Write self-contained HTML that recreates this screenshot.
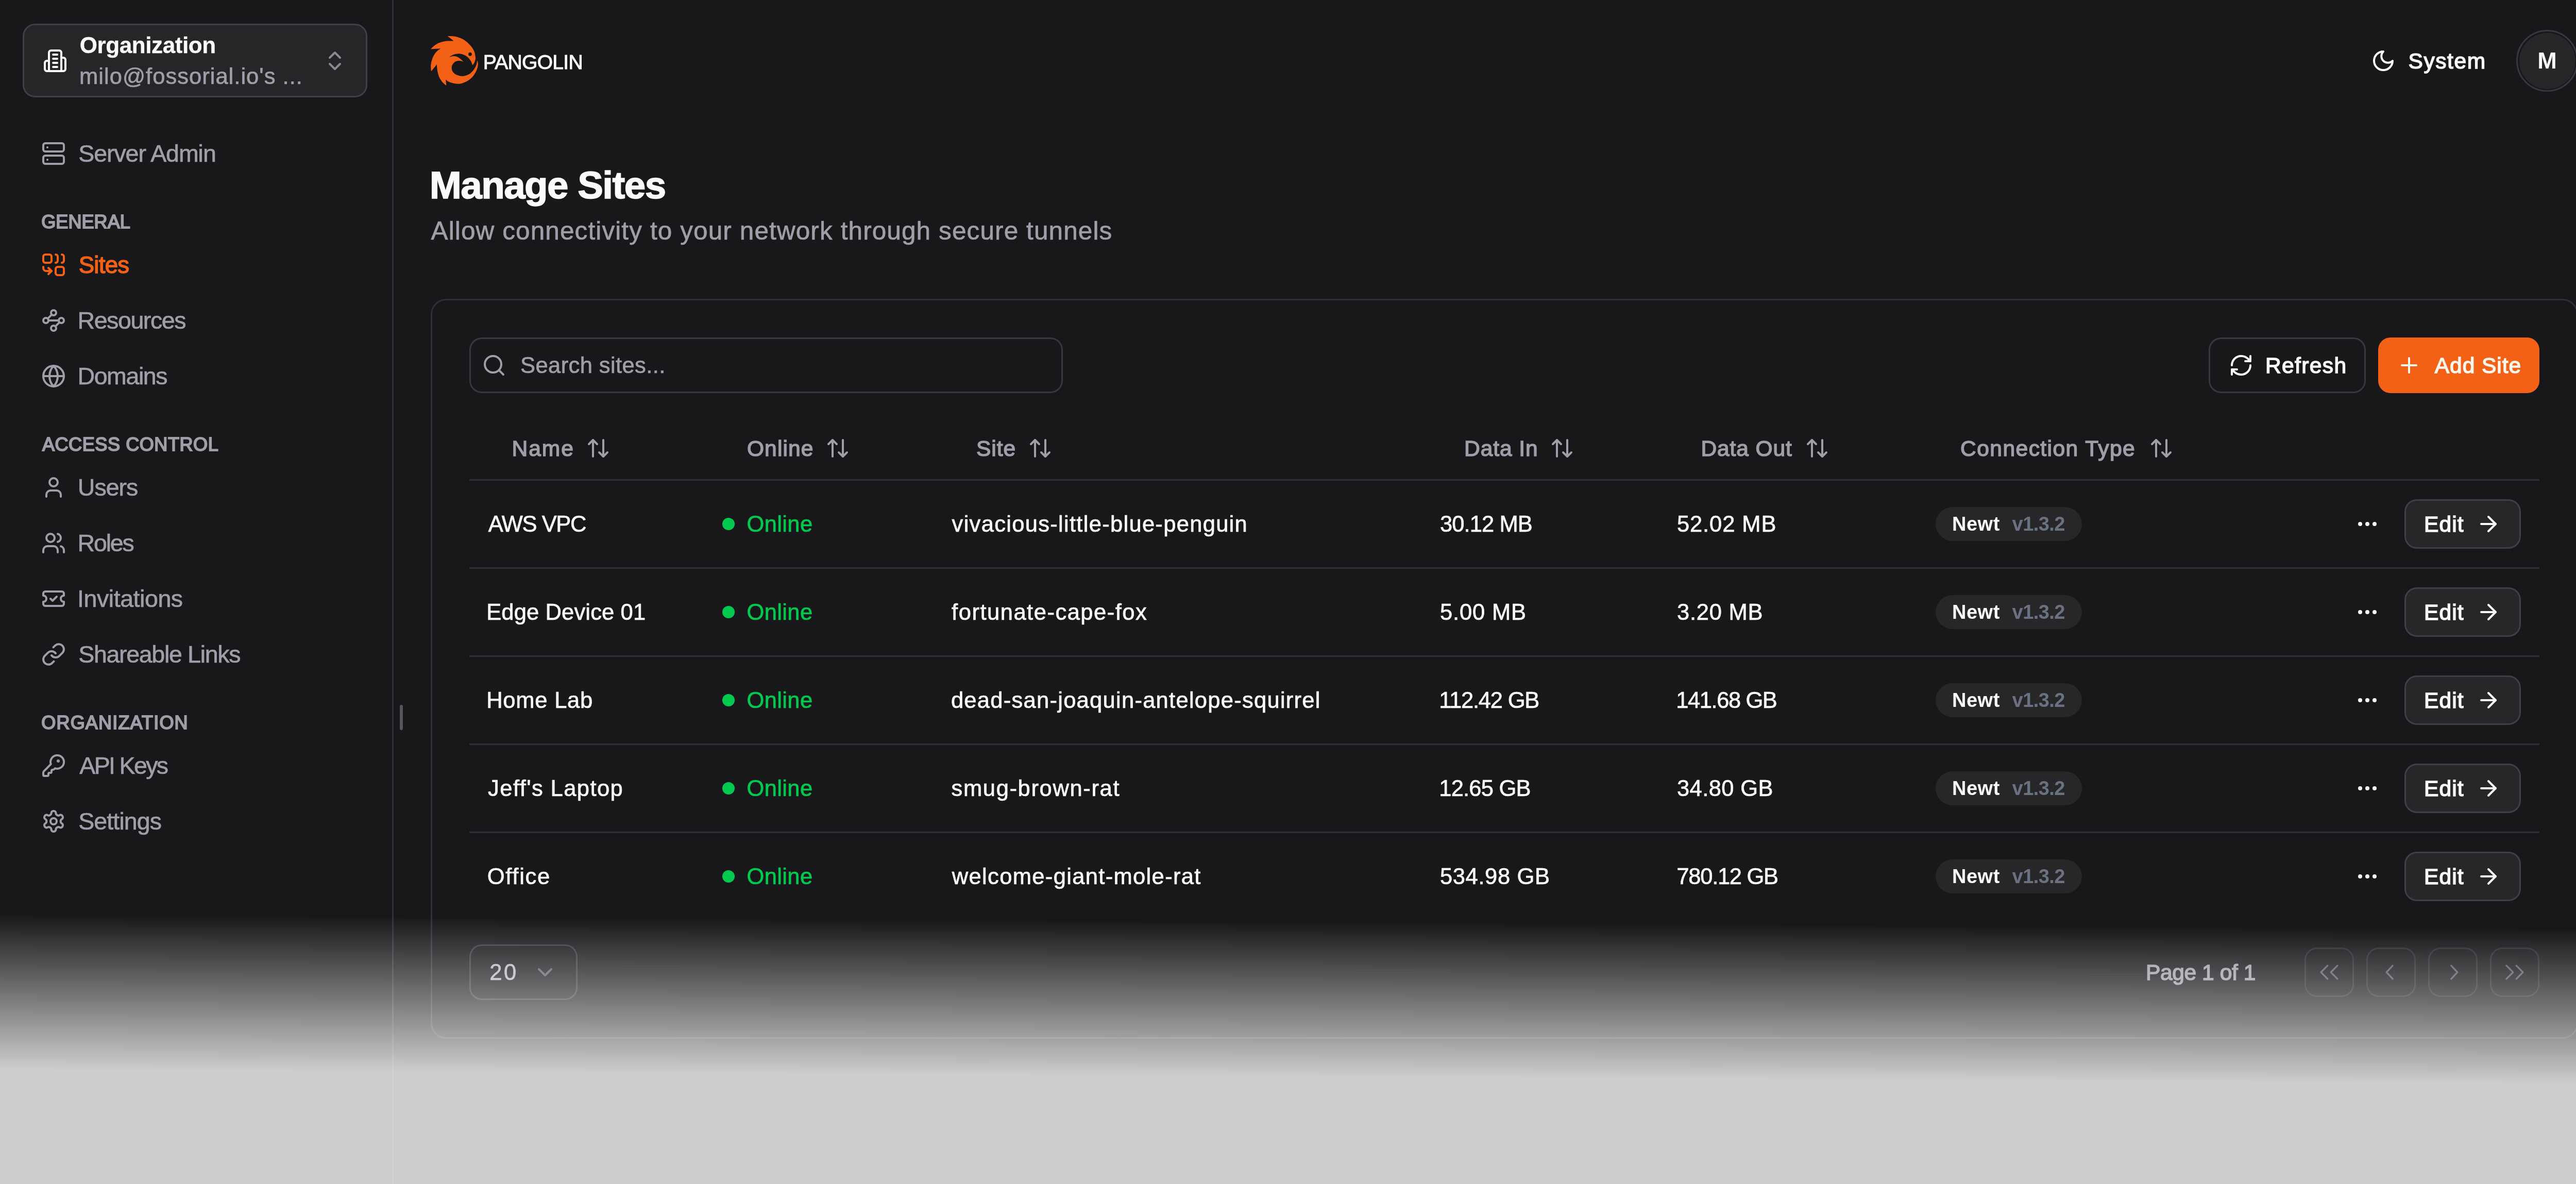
<!DOCTYPE html>
<html lang="en">
<head>
<meta charset="utf-8">
<title>Manage Sites - Pangolin</title>
<style>
*{box-sizing:border-box;margin:0;padding:0}
html,body{width:5074px;height:2298px;overflow:hidden;background:#18181b}
body{position:relative;font-family:"Liberation Sans",sans-serif;color:#fafafa;-webkit-font-smoothing:antialiased}
#app{position:absolute;left:0;top:0;width:5074px;height:2298px;background:#18181b;overflow:hidden}
span,h1,p,a,label,button{position:absolute;white-space:nowrap;display:block;font-weight:400;text-decoration:none;background:none;border:0;font-family:inherit}
.bx{position:absolute}
.ic{position:absolute;display:block;overflow:visible}
aside,header,main,nav,section{position:absolute;left:0;top:0}
#content{position:absolute;left:0;top:0;width:5074px;height:2298px;will-change:transform}
#fade{position:absolute;left:-200px;top:1773.9px;width:5600px;height:900px;transform-origin:0 0;transform:rotate(0.321deg);background:linear-gradient(to bottom,rgba(255,255,255,0) 0,rgba(255,255,255,.78) 300px,rgba(255,255,255,.78) 100%);pointer-events:none}
</style>
</head>
<body>
<div id="app">
<div id="content">

<aside>
<div class="bx" style="left:0.0px;top:0.0px;width:764.0px;height:2298.0px;border-right:3px solid #303034;"></div>
<div class="bx" style="left:44.0px;top:46.0px;width:669.0px;height:143.0px;border:3px solid #3f3f44;border-radius:24px;background:#262629;"></div>
<svg class="ic" style="left:83.0px;top:94.0px;width:48px;height:48px;color:#fafafa;" viewBox="0 0 24 24" fill="none" stroke="currentColor" stroke-width="2" stroke-linecap="round" stroke-linejoin="round"><path d="M6 22V4a2 2 0 0 1 2-2h8a2 2 0 0 1 2 2v18Z"/><path d="M6 12H4a2 2 0 0 0-2 2v6a2 2 0 0 0 2 2h2"/><path d="M18 9h2a2 2 0 0 1 2 2v9a2 2 0 0 1-2 2h-2"/><path d="M10 6h4"/><path d="M10 10h4"/><path d="M10 14h4"/><path d="M10 18h4"/></svg>
<span style="left:154.8px;top:61px;font-size:44px;line-height:54px;color:#fafafa;font-weight:700;letter-spacing:-0.42px;-webkit-text-stroke:0.3px #fafafa;">Organization</span>
<span style="left:154.0px;top:122px;font-size:43.5px;line-height:53px;color:#9f9fa9;letter-spacing:1.03px;-webkit-text-stroke:0.7px #9f9fa9;">milo@fossorial.io's ...</span>
<svg class="ic" style="left:626.0px;top:94.0px;width:48px;height:48px;color:#8b8b8f;" viewBox="0 0 24 24" fill="none" stroke="currentColor" stroke-width="2" stroke-linecap="round" stroke-linejoin="round"><path d="m7 15 5 5 5-5"/><path d="m7 9 5-5 5 5"/></svg>
<nav>
<svg class="ic" style="left:80.0px;top:274.0px;width:48px;height:48px;color:#9f9fa9;" viewBox="0 0 24 24" fill="none" stroke="currentColor" stroke-width="2" stroke-linecap="round" stroke-linejoin="round"><rect width="20" height="8" x="2" y="2" rx="2" ry="2"/><rect width="20" height="8" x="2" y="14" rx="2" ry="2"/><line x1="6" x2="6.01" y1="6" y2="6"/><line x1="6" x2="6.01" y1="18" y2="18"/></svg>
<a style="left:152.2px;top:270px;font-size:46.5px;line-height:56px;color:#9f9fa9;letter-spacing:-1.05px;-webkit-text-stroke:0.7px #9f9fa9;">Server Admin</a>
<svg class="ic" style="left:80.0px;top:490.0px;width:48px;height:48px;color:#f36117;" viewBox="0 0 24 24" fill="none" stroke="currentColor" stroke-width="2" stroke-linecap="round" stroke-linejoin="round"><path d="M10 18H5a3 3 0 0 1-3-3v-1"/><path d="M14 2a2 2 0 0 1 2 2v4a2 2 0 0 1-2 2"/><path d="M20 2a2 2 0 0 1 2 2v4a2 2 0 0 1-2 2"/><path d="m7 21 3-3-3-3"/><rect x="14" y="14" width="8" height="8" rx="2"/><rect x="2" y="2" width="8" height="8" rx="2"/></svg>
<a style="left:152.7px;top:487px;font-size:45.5px;line-height:55px;color:#f36117;letter-spacing:-0.69px;-webkit-text-stroke:1.5px #f36117;">Sites</a>
<svg class="ic" style="left:80.0px;top:598.0px;width:48px;height:48px;color:#9f9fa9;" viewBox="0 0 24 24" fill="none" stroke="currentColor" stroke-width="2" stroke-linecap="round" stroke-linejoin="round"><circle cx="12" cy="4.5" r="2.5"/><path d="m10.2 6.3-3.9 3.9"/><circle cx="4.5" cy="12" r="2.5"/><path d="M7 12h10"/><circle cx="19.5" cy="12" r="2.5"/><path d="m13.8 17.7 3.9-3.9"/><circle cx="12" cy="19.5" r="2.5"/></svg>
<a style="left:150.5px;top:594px;font-size:46.5px;line-height:56px;color:#9f9fa9;letter-spacing:-1.41px;-webkit-text-stroke:0.7px #9f9fa9;">Resources</a>
<svg class="ic" style="left:80.0px;top:706.0px;width:48px;height:48px;color:#9f9fa9;" viewBox="0 0 24 24" fill="none" stroke="currentColor" stroke-width="2" stroke-linecap="round" stroke-linejoin="round"><circle cx="12" cy="12" r="10"/><path d="M12 2a14.5 14.5 0 0 0 0 20 14.5 14.5 0 0 0 0-20"/><path d="M2 12h20"/></svg>
<a style="left:150.5px;top:702px;font-size:46.5px;line-height:56px;color:#9f9fa9;letter-spacing:-1.41px;-webkit-text-stroke:0.7px #9f9fa9;">Domains</a>
<svg class="ic" style="left:80.0px;top:922.0px;width:48px;height:48px;color:#9f9fa9;" viewBox="0 0 24 24" fill="none" stroke="currentColor" stroke-width="2" stroke-linecap="round" stroke-linejoin="round"><path d="M19 21v-2a4 4 0 0 0-4-4H9a4 4 0 0 0-4 4v2"/><circle cx="12" cy="7" r="4"/></svg>
<a style="left:150.8px;top:918px;font-size:46.5px;line-height:56px;color:#9f9fa9;letter-spacing:-0.99px;-webkit-text-stroke:0.7px #9f9fa9;">Users</a>
<svg class="ic" style="left:80.0px;top:1030.0px;width:48px;height:48px;color:#9f9fa9;" viewBox="0 0 24 24" fill="none" stroke="currentColor" stroke-width="2" stroke-linecap="round" stroke-linejoin="round"><path d="M16 21v-2a4 4 0 0 0-4-4H6a4 4 0 0 0-4 4v2"/><circle cx="9" cy="7" r="4"/><path d="M22 21v-2a4 4 0 0 0-3-3.87"/><path d="M16 3.13a4 4 0 0 1 0 7.75"/></svg>
<a style="left:150.5px;top:1026px;font-size:46.5px;line-height:56px;color:#9f9fa9;letter-spacing:-2.15px;-webkit-text-stroke:0.7px #9f9fa9;">Roles</a>
<svg class="ic" style="left:80.0px;top:1138.0px;width:48px;height:48px;color:#9f9fa9;" viewBox="0 0 24 24" fill="none" stroke="currentColor" stroke-width="2" stroke-linecap="round" stroke-linejoin="round"><path d="M2 9a3 3 0 0 1 0 6v2a2 2 0 0 0 2 2h16a2 2 0 0 0 2-2v-2a3 3 0 0 1 0-6V7a2 2 0 0 0-2-2H4a2 2 0 0 0-2 2Z"/><path d="m9 12 2 2 4-4"/></svg>
<a style="left:150.1px;top:1134px;font-size:46.5px;line-height:56px;color:#9f9fa9;letter-spacing:-0.44px;-webkit-text-stroke:0.7px #9f9fa9;">Invitations</a>
<svg class="ic" style="left:80.0px;top:1246.0px;width:48px;height:48px;color:#9f9fa9;" viewBox="0 0 24 24" fill="none" stroke="currentColor" stroke-width="2" stroke-linecap="round" stroke-linejoin="round"><path d="M10 13a5 5 0 0 0 7.54.54l3-3a5 5 0 0 0-7.07-7.07l-1.72 1.71"/><path d="M14 11a5 5 0 0 0-7.54-.54l-3 3a5 5 0 0 0 7.07 7.07l1.71-1.71"/></svg>
<a style="left:152.2px;top:1242px;font-size:46.5px;line-height:56px;color:#9f9fa9;letter-spacing:-1.30px;-webkit-text-stroke:0.7px #9f9fa9;">Shareable Links</a>
<svg class="ic" style="left:80.0px;top:1462.0px;width:48px;height:48px;color:#9f9fa9;" viewBox="0 0 24 24" fill="none" stroke="currentColor" stroke-width="2" stroke-linecap="round" stroke-linejoin="round"><path d="M2.586 17.414A2 2 0 0 0 2 18.828V21a1 1 0 0 0 1 1h3a1 1 0 0 0 1-1v-1a1 1 0 0 1 1-1h1a1 1 0 0 0 1-1v-1a1 1 0 0 1 1-1h.172a2 2 0 0 0 1.414-.586l.814-.814a6.5 6.5 0 1 0-4-4z"/><circle cx="16.5" cy="7.5" r=".5" fill="currentColor"/></svg>
<a style="left:154.3px;top:1458px;font-size:46.5px;line-height:56px;color:#9f9fa9;letter-spacing:-2.65px;-webkit-text-stroke:0.7px #9f9fa9;">API Keys</a>
<svg class="ic" style="left:80.0px;top:1570.0px;width:48px;height:48px;color:#9f9fa9;" viewBox="0 0 24 24" fill="none" stroke="currentColor" stroke-width="2" stroke-linecap="round" stroke-linejoin="round"><path d="M12.22 2h-.44a2 2 0 0 0-2 2v.18a2 2 0 0 1-1 1.73l-.43.25a2 2 0 0 1-2 0l-.15-.08a2 2 0 0 0-2.73.73l-.22.38a2 2 0 0 0 .73 2.73l.15.1a2 2 0 0 1 1 1.72v.51a2 2 0 0 1-1 1.74l-.15.09a2 2 0 0 0-.73 2.73l.22.38a2 2 0 0 0 2.73.73l.15-.08a2 2 0 0 1 2 0l.43.25a2 2 0 0 1 1 1.73V20a2 2 0 0 0 2 2h.44a2 2 0 0 0 2-2v-.18a2 2 0 0 1 1-1.73l.43-.25a2 2 0 0 1 2 0l.15.08a2 2 0 0 0 2.73-.73l.22-.39a2 2 0 0 0-.73-2.73l-.15-.08a2 2 0 0 1-1-1.74v-.5a2 2 0 0 1 1-1.74l.15-.09a2 2 0 0 0 .73-2.73l-.22-.38a2 2 0 0 0-2.73-.73l-.15.08a2 2 0 0 1-2 0l-.43-.25a2 2 0 0 1-1-1.73V4a2 2 0 0 0-2-2z"/><circle cx="12" cy="12" r="3"/></svg>
<a style="left:152.2px;top:1566px;font-size:46.5px;line-height:56px;color:#9f9fa9;letter-spacing:-0.88px;-webkit-text-stroke:0.7px #9f9fa9;">Settings</a>
<span style="left:80.2px;top:408px;font-size:36px;line-height:46px;color:#9f9fa9;letter-spacing:0.09px;-webkit-text-stroke:2.0px #9f9fa9;">GENERAL</span>
<span style="left:81.9px;top:840px;font-size:36px;line-height:46px;color:#9f9fa9;letter-spacing:0.60px;-webkit-text-stroke:2.0px #9f9fa9;">ACCESS CONTROL</span>
<span style="left:80.3px;top:1380px;font-size:36px;line-height:46px;color:#9f9fa9;letter-spacing:1.18px;-webkit-text-stroke:2.0px #9f9fa9;">ORGANIZATION</span>
</nav>
<div class="bx" style="left:776.0px;top:1368.0px;width:6.0px;height:49.0px;background:#56565c;border-radius:3px;"></div>
</aside>
<header>
<svg class="ic" style="left:826px;top:60px;width:120px;height:116px" viewBox="0 0 1207 1167"><path d="M1010 575C1012 588 1027 619 1025 650C1023 681 1016 722 1000 760C984 798 960 844 930 880C900 916 862 950 820 975C778 1000 723 1022 680 1030C637 1038 598 1032 560 1025C522 1018 478 1002 450 990C422 978 404 957 395 950L405 1065C392 1054 353 1028 330 1000C307 972 281 937 265 900C249 863 240 821 232 780C224 739 222 676 220 655L110 790C109 772 101 715 103 680C105 645 110 613 120 580C130 547 143 510 160 480C177 450 198 422 220 400C242 378 282 354 295 345L100 355C112 344 143 310 170 290C197 270 225 250 260 235C295 220 332 207 380 200C428 193 522 196 550 195L430 100C458 102 545 99 600 112C655 125 713 150 760 180C807 210 848 253 880 290C912 327 934 362 950 400C966 438 973 487 975 520C977 553 969 575 960 600C951 625 927 658 920 670C913 655 897 607 880 580C863 553 843 530 820 510C797 490 770 473 740 462C710 451 673 444 640 445C607 446 569 454 540 465C511 476 478 502 465 510C481 507 529 490 560 492C591 494 619 503 650 522C681 541 729 591 745 605C736 602 711 588 690 585C669 582 642 582 620 587C598 592 577 601 560 615C543 629 528 651 520 670C512 689 508 709 510 730C512 751 517 775 530 795C543 815 565 836 590 850C615 864 652 875 680 880C708 885 730 885 760 878C790 871 830 860 860 840C890 820 918 788 940 760C962 732 978 701 990 670C1002 639 1007 591 1010 575Z" fill="#f36117"/><circle cx="870" cy="455" r="34" fill="#18181b"/></svg>
<span style="left:937.7px;top:96px;font-size:39px;line-height:49px;color:#fafafa;letter-spacing:-0.67px;-webkit-text-stroke:1.0px #fafafa;">PANGOLIN</span>
<svg class="ic" style="left:4602.0px;top:94.0px;width:48px;height:48px;color:#fafafa;" viewBox="0 0 24 24" fill="none" stroke="currentColor" stroke-width="2" stroke-linecap="round" stroke-linejoin="round"><path d="M12 3a6 6 0 0 0 9 9 9 9 0 1 1-9-9Z"/></svg>
<span style="left:4674.5px;top:93px;font-size:42.5px;line-height:52px;color:#fafafa;letter-spacing:1.57px;-webkit-text-stroke:1.5px #fafafa;">System</span>
<div class="bx" style="left:4884.0px;top:58.0px;width:120.0px;height:120.0px;border:3px solid #38383c;border-radius:50%;"></div>
<div class="bx" style="left:4889.5px;top:63.5px;width:109.0px;height:109.0px;background:#27272a;border-radius:50%;"></div>
<span style="left:4925.2px;top:90px;font-size:45px;line-height:55px;color:#fafafa;font-weight:700;">M</span>
</header>
<main>
<h1 style="left:833.8px;top:318px;font-size:74.5px;line-height:84px;color:#fafafa;font-weight:700;letter-spacing:-1.53px;-webkit-text-stroke:1.5px #fafafa;">Manage Sites</h1>
<p style="left:836.6px;top:418px;font-size:49.5px;line-height:59px;color:#9f9fa9;letter-spacing:1.10px;-webkit-text-stroke:0.7px #9f9fa9;">Allow connectivity to your network through secure tunnels</p>
<section>
<div class="bx" style="left:836.0px;top:580.0px;width:4168.0px;height:1436.0px;border:3px solid #303034;border-radius:30px;"></div>
<div class="bx" style="left:911.0px;top:655.0px;width:1152.0px;height:108.0px;border:3px solid #38383c;border-radius:24px;"></div>
<svg class="ic" style="left:935.0px;top:685.0px;width:48px;height:48px;color:#9f9fa9;" viewBox="0 0 24 24" fill="none" stroke="currentColor" stroke-width="2" stroke-linecap="round" stroke-linejoin="round"><circle cx="11" cy="11" r="8"/><path d="m21 21-4.3-4.3"/></svg>
<span style="left:1010.0px;top:683px;font-size:43.5px;line-height:53px;color:#9f9fa9;letter-spacing:0.41px;-webkit-text-stroke:0.7px #9f9fa9;">Search sites...</span>
<div class="bx" style="left:4287.0px;top:655.0px;width:305.0px;height:108.0px;border:3px solid #38383c;border-radius:24px;"></div>
<svg class="ic" style="left:4326.0px;top:685.0px;width:48px;height:48px;color:#fafafa;" viewBox="0 0 24 24" fill="none" stroke="currentColor" stroke-width="2" stroke-linecap="round" stroke-linejoin="round"><path d="M3 12a9 9 0 0 1 9-9 9.75 9.75 0 0 1 6.74 2.74L21 8"/><path d="M21 3v5h-5"/><path d="M21 12a9 9 0 0 1-9 9 9.75 9.75 0 0 1-6.74-2.74L3 16"/><path d="M8 16H3v5"/></svg>
<span style="left:4397.0px;top:684px;font-size:42.5px;line-height:52px;color:#fafafa;letter-spacing:1.37px;-webkit-text-stroke:1.5px #fafafa;">Refresh</span>
<div class="bx" style="left:4616.0px;top:655.0px;width:313.0px;height:108.0px;background:#f36117;border-radius:24px;"></div>
<svg class="ic" style="left:4652.0px;top:685.0px;width:48px;height:48px;color:#fff7ed;" viewBox="0 0 24 24" fill="none" stroke="currentColor" stroke-width="2" stroke-linecap="round" stroke-linejoin="round"><path d="M5 12h14"/><path d="M12 5v14"/></svg>
<span style="left:4725.8px;top:684px;font-size:42.5px;line-height:52px;color:#fff7ed;letter-spacing:0.94px;-webkit-text-stroke:1.5px #fff7ed;">Add Site</span>
<span style="left:993.6px;top:845px;font-size:42.5px;line-height:52px;color:#9f9fa9;letter-spacing:1.94px;-webkit-text-stroke:1.5px #9f9fa9;">Name</span>
<svg class="ic" style="left:1136.7px;top:846.3px;width:48px;height:48px;color:#9f9fa9;" viewBox="0 0 24 24" fill="none" stroke="currentColor" stroke-width="2" stroke-linecap="round" stroke-linejoin="round"><path d="m21 16-4 4-4-4"/><path d="M17 20V4"/><path d="m3 8 4-4 4 4"/><path d="M7 4v16"/></svg>
<span style="left:1449.9px;top:845px;font-size:42.5px;line-height:52px;color:#9f9fa9;letter-spacing:1.15px;-webkit-text-stroke:1.5px #9f9fa9;">Online</span>
<svg class="ic" style="left:1601.7px;top:846.3px;width:48px;height:48px;color:#9f9fa9;" viewBox="0 0 24 24" fill="none" stroke="currentColor" stroke-width="2" stroke-linecap="round" stroke-linejoin="round"><path d="m21 16-4 4-4-4"/><path d="M17 20V4"/><path d="m3 8 4-4 4 4"/><path d="M7 4v16"/></svg>
<span style="left:1895.1px;top:845px;font-size:42.5px;line-height:52px;color:#9f9fa9;letter-spacing:0.93px;-webkit-text-stroke:1.5px #9f9fa9;">Site</span>
<svg class="ic" style="left:1994.8px;top:846.3px;width:48px;height:48px;color:#9f9fa9;" viewBox="0 0 24 24" fill="none" stroke="currentColor" stroke-width="2" stroke-linecap="round" stroke-linejoin="round"><path d="m21 16-4 4-4-4"/><path d="M17 20V4"/><path d="m3 8 4-4 4 4"/><path d="M7 4v16"/></svg>
<span style="left:2842.0px;top:845px;font-size:42.5px;line-height:52px;color:#9f9fa9;letter-spacing:0.95px;-webkit-text-stroke:1.5px #9f9fa9;">Data In</span>
<svg class="ic" style="left:3008.3px;top:846.3px;width:48px;height:48px;color:#9f9fa9;" viewBox="0 0 24 24" fill="none" stroke="currentColor" stroke-width="2" stroke-linecap="round" stroke-linejoin="round"><path d="m21 16-4 4-4-4"/><path d="M17 20V4"/><path d="m3 8 4-4 4 4"/><path d="M7 4v16"/></svg>
<span style="left:3301.5px;top:845px;font-size:42.5px;line-height:52px;color:#9f9fa9;letter-spacing:0.89px;-webkit-text-stroke:1.5px #9f9fa9;">Data Out</span>
<svg class="ic" style="left:3503.3px;top:846.3px;width:48px;height:48px;color:#9f9fa9;" viewBox="0 0 24 24" fill="none" stroke="currentColor" stroke-width="2" stroke-linecap="round" stroke-linejoin="round"><path d="m21 16-4 4-4-4"/><path d="M17 20V4"/><path d="m3 8 4-4 4 4"/><path d="M7 4v16"/></svg>
<span style="left:3805.1px;top:845px;font-size:42.5px;line-height:52px;color:#9f9fa9;letter-spacing:1.46px;-webkit-text-stroke:1.5px #9f9fa9;">Connection Type</span>
<svg class="ic" style="left:4170.8px;top:846.3px;width:48px;height:48px;color:#9f9fa9;" viewBox="0 0 24 24" fill="none" stroke="currentColor" stroke-width="2" stroke-linecap="round" stroke-linejoin="round"><path d="m21 16-4 4-4-4"/><path d="M17 20V4"/><path d="m3 8 4-4 4 4"/><path d="M7 4v16"/></svg>
<div class="bx" style="left:911.0px;top:930.0px;width:4018.0px;height:3.0px;background:#303034;"></div>
<span style="left:947.7px;top:991px;font-size:43.5px;line-height:53px;color:#fafafa;letter-spacing:-1.38px;-webkit-text-stroke:0.7px #fafafa;">AWS VPC</span>
<div class="bx" style="left:1402.0px;top:1005.0px;width:24.0px;height:24.0px;background:#00c950;border-radius:50%;"></div>
<span style="left:1449.5px;top:991px;font-size:43.5px;line-height:53px;color:#00c950;letter-spacing:0.37px;-webkit-text-stroke:0.7px #00c950;">Online</span>
<span style="left:1847.6px;top:991px;font-size:43.5px;line-height:53px;color:#fafafa;letter-spacing:1.30px;-webkit-text-stroke:0.7px #fafafa;">vivacious-little-blue-penguin</span>
<span style="left:2795.0px;top:991px;font-size:43.5px;line-height:53px;color:#fafafa;letter-spacing:-0.91px;-webkit-text-stroke:0.7px #fafafa;">30.12 MB</span>
<span style="left:3254.9px;top:991px;font-size:43.5px;line-height:53px;color:#fafafa;letter-spacing:0.92px;-webkit-text-stroke:0.7px #fafafa;">52.02 MB</span>
<div class="bx" style="left:3756.6px;top:984.0px;width:284.4px;height:66.0px;background:#27272a;border-radius:33px;"></div>
<span style="left:3788.9px;top:993px;font-size:38px;line-height:48px;color:#fafafa;font-weight:700;letter-spacing:0.57px;">Newt</span>
<span style="left:3905.6px;top:993px;font-size:38px;line-height:48px;color:#6a7282;font-weight:700;letter-spacing:-0.58px;">v1.3.2</span>
<svg class="ic" style="left:4571.0px;top:993.0px;width:48px;height:48px;color:#fafafa;" viewBox="0 0 24 24" fill="none" stroke="currentColor" stroke-width="2" stroke-linecap="round" stroke-linejoin="round"><circle cx="12" cy="12" r="1"/><circle cx="19" cy="12" r="1"/><circle cx="5" cy="12" r="1"/></svg>
<div class="bx" style="left:4667.0px;top:969.0px;width:226.0px;height:96.0px;background:#27272a;border:3px solid #3f3f44;border-radius:24px;"></div>
<span style="left:4705.0px;top:992px;font-size:42.5px;line-height:52px;color:#fafafa;letter-spacing:1.09px;-webkit-text-stroke:1.5px #fafafa;">Edit</span>
<svg class="ic" style="left:4806.4px;top:993.0px;width:48px;height:48px;color:#fafafa;" viewBox="0 0 24 24" fill="none" stroke="currentColor" stroke-width="2" stroke-linecap="round" stroke-linejoin="round"><path d="M5 12h14"/><path d="m12 5 7 7-7 7"/></svg>
<div class="bx" style="left:911.0px;top:1101.0px;width:4018.0px;height:3.0px;background:#303034;"></div>
<span style="left:944.2px;top:1162px;font-size:43.5px;line-height:53px;color:#fafafa;letter-spacing:0.14px;-webkit-text-stroke:0.7px #fafafa;">Edge Device 01</span>
<div class="bx" style="left:1402.0px;top:1176.0px;width:24.0px;height:24.0px;background:#00c950;border-radius:50%;"></div>
<span style="left:1449.5px;top:1162px;font-size:43.5px;line-height:53px;color:#00c950;letter-spacing:0.37px;-webkit-text-stroke:0.7px #00c950;">Online</span>
<span style="left:1847.1px;top:1162px;font-size:43.5px;line-height:53px;color:#fafafa;letter-spacing:1.51px;-webkit-text-stroke:0.7px #fafafa;">fortunate-cape-fox</span>
<span style="left:2794.9px;top:1162px;font-size:43.5px;line-height:53px;color:#fafafa;letter-spacing:0.86px;-webkit-text-stroke:0.7px #fafafa;">5.00 MB</span>
<span style="left:3255.0px;top:1162px;font-size:43.5px;line-height:53px;color:#fafafa;letter-spacing:0.74px;-webkit-text-stroke:0.7px #fafafa;">3.20 MB</span>
<div class="bx" style="left:3756.6px;top:1155.0px;width:284.4px;height:66.0px;background:#27272a;border-radius:33px;"></div>
<span style="left:3788.9px;top:1164px;font-size:38px;line-height:48px;color:#fafafa;font-weight:700;letter-spacing:0.57px;">Newt</span>
<span style="left:3905.6px;top:1164px;font-size:38px;line-height:48px;color:#6a7282;font-weight:700;letter-spacing:-0.58px;">v1.3.2</span>
<svg class="ic" style="left:4571.0px;top:1164.0px;width:48px;height:48px;color:#fafafa;" viewBox="0 0 24 24" fill="none" stroke="currentColor" stroke-width="2" stroke-linecap="round" stroke-linejoin="round"><circle cx="12" cy="12" r="1"/><circle cx="19" cy="12" r="1"/><circle cx="5" cy="12" r="1"/></svg>
<div class="bx" style="left:4667.0px;top:1140.0px;width:226.0px;height:96.0px;background:#27272a;border:3px solid #3f3f44;border-radius:24px;"></div>
<span style="left:4705.0px;top:1163px;font-size:42.5px;line-height:52px;color:#fafafa;letter-spacing:1.09px;-webkit-text-stroke:1.5px #fafafa;">Edit</span>
<svg class="ic" style="left:4806.4px;top:1164.0px;width:48px;height:48px;color:#fafafa;" viewBox="0 0 24 24" fill="none" stroke="currentColor" stroke-width="2" stroke-linecap="round" stroke-linejoin="round"><path d="M5 12h14"/><path d="m12 5 7 7-7 7"/></svg>
<div class="bx" style="left:911.0px;top:1272.0px;width:4018.0px;height:3.0px;background:#303034;"></div>
<span style="left:944.2px;top:1333px;font-size:43.5px;line-height:53px;color:#fafafa;letter-spacing:0.77px;-webkit-text-stroke:0.7px #fafafa;">Home Lab</span>
<div class="bx" style="left:1402.0px;top:1347.0px;width:24.0px;height:24.0px;background:#00c950;border-radius:50%;"></div>
<span style="left:1449.5px;top:1333px;font-size:43.5px;line-height:53px;color:#00c950;letter-spacing:0.37px;-webkit-text-stroke:0.7px #00c950;">Online</span>
<span style="left:1845.9px;top:1333px;font-size:43.5px;line-height:53px;color:#fafafa;letter-spacing:1.27px;-webkit-text-stroke:0.7px #fafafa;">dead-san-joaquin-antelope-squirrel</span>
<span style="left:2793.3px;top:1333px;font-size:43.5px;line-height:53px;color:#fafafa;letter-spacing:-1.22px;-webkit-text-stroke:0.7px #fafafa;">112.42 GB</span>
<span style="left:3253.3px;top:1333px;font-size:43.5px;line-height:53px;color:#fafafa;letter-spacing:-1.43px;-webkit-text-stroke:0.7px #fafafa;">141.68 GB</span>
<div class="bx" style="left:3756.6px;top:1326.0px;width:284.4px;height:66.0px;background:#27272a;border-radius:33px;"></div>
<span style="left:3788.9px;top:1335px;font-size:38px;line-height:48px;color:#fafafa;font-weight:700;letter-spacing:0.57px;">Newt</span>
<span style="left:3905.6px;top:1335px;font-size:38px;line-height:48px;color:#6a7282;font-weight:700;letter-spacing:-0.58px;">v1.3.2</span>
<svg class="ic" style="left:4571.0px;top:1335.0px;width:48px;height:48px;color:#fafafa;" viewBox="0 0 24 24" fill="none" stroke="currentColor" stroke-width="2" stroke-linecap="round" stroke-linejoin="round"><circle cx="12" cy="12" r="1"/><circle cx="19" cy="12" r="1"/><circle cx="5" cy="12" r="1"/></svg>
<div class="bx" style="left:4667.0px;top:1311.0px;width:226.0px;height:96.0px;background:#27272a;border:3px solid #3f3f44;border-radius:24px;"></div>
<span style="left:4705.0px;top:1334px;font-size:42.5px;line-height:52px;color:#fafafa;letter-spacing:1.09px;-webkit-text-stroke:1.5px #fafafa;">Edit</span>
<svg class="ic" style="left:4806.4px;top:1335.0px;width:48px;height:48px;color:#fafafa;" viewBox="0 0 24 24" fill="none" stroke="currentColor" stroke-width="2" stroke-linecap="round" stroke-linejoin="round"><path d="M5 12h14"/><path d="m12 5 7 7-7 7"/></svg>
<div class="bx" style="left:911.0px;top:1443.0px;width:4018.0px;height:3.0px;background:#303034;"></div>
<span style="left:947.1px;top:1504px;font-size:43.5px;line-height:53px;color:#fafafa;letter-spacing:1.43px;-webkit-text-stroke:0.7px #fafafa;">Jeff's Laptop</span>
<div class="bx" style="left:1402.0px;top:1518.0px;width:24.0px;height:24.0px;background:#00c950;border-radius:50%;"></div>
<span style="left:1449.5px;top:1504px;font-size:43.5px;line-height:53px;color:#00c950;letter-spacing:0.37px;-webkit-text-stroke:0.7px #00c950;">Online</span>
<span style="left:1846.5px;top:1504px;font-size:43.5px;line-height:53px;color:#fafafa;letter-spacing:1.65px;-webkit-text-stroke:0.7px #fafafa;">smug-brown-rat</span>
<span style="left:2793.3px;top:1504px;font-size:43.5px;line-height:53px;color:#fafafa;letter-spacing:-0.81px;-webkit-text-stroke:0.7px #fafafa;">12.65 GB</span>
<span style="left:3255.0px;top:1504px;font-size:43.5px;line-height:53px;color:#fafafa;letter-spacing:0.39px;-webkit-text-stroke:0.7px #fafafa;">34.80 GB</span>
<div class="bx" style="left:3756.6px;top:1497.0px;width:284.4px;height:66.0px;background:#27272a;border-radius:33px;"></div>
<span style="left:3788.9px;top:1506px;font-size:38px;line-height:48px;color:#fafafa;font-weight:700;letter-spacing:0.57px;">Newt</span>
<span style="left:3905.6px;top:1506px;font-size:38px;line-height:48px;color:#6a7282;font-weight:700;letter-spacing:-0.58px;">v1.3.2</span>
<svg class="ic" style="left:4571.0px;top:1506.0px;width:48px;height:48px;color:#fafafa;" viewBox="0 0 24 24" fill="none" stroke="currentColor" stroke-width="2" stroke-linecap="round" stroke-linejoin="round"><circle cx="12" cy="12" r="1"/><circle cx="19" cy="12" r="1"/><circle cx="5" cy="12" r="1"/></svg>
<div class="bx" style="left:4667.0px;top:1482.0px;width:226.0px;height:96.0px;background:#27272a;border:3px solid #3f3f44;border-radius:24px;"></div>
<span style="left:4705.0px;top:1505px;font-size:42.5px;line-height:52px;color:#fafafa;letter-spacing:1.09px;-webkit-text-stroke:1.5px #fafafa;">Edit</span>
<svg class="ic" style="left:4806.4px;top:1506.0px;width:48px;height:48px;color:#fafafa;" viewBox="0 0 24 24" fill="none" stroke="currentColor" stroke-width="2" stroke-linecap="round" stroke-linejoin="round"><path d="M5 12h14"/><path d="m12 5 7 7-7 7"/></svg>
<div class="bx" style="left:911.0px;top:1614.0px;width:4018.0px;height:3.0px;background:#303034;"></div>
<span style="left:945.7px;top:1675px;font-size:43.5px;line-height:53px;color:#fafafa;letter-spacing:1.76px;-webkit-text-stroke:0.7px #fafafa;">Office</span>
<div class="bx" style="left:1402.0px;top:1689.0px;width:24.0px;height:24.0px;background:#00c950;border-radius:50%;"></div>
<span style="left:1449.5px;top:1675px;font-size:43.5px;line-height:53px;color:#00c950;letter-spacing:0.37px;-webkit-text-stroke:0.7px #00c950;">Online</span>
<span style="left:1847.8px;top:1675px;font-size:43.5px;line-height:53px;color:#fafafa;letter-spacing:1.34px;-webkit-text-stroke:0.7px #fafafa;">welcome-giant-mole-rat</span>
<span style="left:2794.9px;top:1675px;font-size:43.5px;line-height:53px;color:#fafafa;letter-spacing:0.64px;-webkit-text-stroke:0.7px #fafafa;">534.98 GB</span>
<span style="left:3254.4px;top:1675px;font-size:43.5px;line-height:53px;color:#fafafa;letter-spacing:-1.28px;-webkit-text-stroke:0.7px #fafafa;">780.12 GB</span>
<div class="bx" style="left:3756.6px;top:1668.0px;width:284.4px;height:66.0px;background:#27272a;border-radius:33px;"></div>
<span style="left:3788.9px;top:1677px;font-size:38px;line-height:48px;color:#fafafa;font-weight:700;letter-spacing:0.57px;">Newt</span>
<span style="left:3905.6px;top:1677px;font-size:38px;line-height:48px;color:#6a7282;font-weight:700;letter-spacing:-0.58px;">v1.3.2</span>
<svg class="ic" style="left:4571.0px;top:1677.0px;width:48px;height:48px;color:#fafafa;" viewBox="0 0 24 24" fill="none" stroke="currentColor" stroke-width="2" stroke-linecap="round" stroke-linejoin="round"><circle cx="12" cy="12" r="1"/><circle cx="19" cy="12" r="1"/><circle cx="5" cy="12" r="1"/></svg>
<div class="bx" style="left:4667.0px;top:1653.0px;width:226.0px;height:96.0px;background:#27272a;border:3px solid #3f3f44;border-radius:24px;"></div>
<span style="left:4705.0px;top:1676px;font-size:42.5px;line-height:52px;color:#fafafa;letter-spacing:1.09px;-webkit-text-stroke:1.5px #fafafa;">Edit</span>
<svg class="ic" style="left:4806.4px;top:1677.0px;width:48px;height:48px;color:#fafafa;" viewBox="0 0 24 24" fill="none" stroke="currentColor" stroke-width="2" stroke-linecap="round" stroke-linejoin="round"><path d="M5 12h14"/><path d="m12 5 7 7-7 7"/></svg>
<div class="bx" style="left:911.0px;top:1833.0px;width:210.0px;height:108.0px;border:3px solid #38383c;border-radius:24px;"></div>
<span style="left:950.3px;top:1861px;font-size:43.5px;line-height:53px;color:#b6b6be;letter-spacing:3.50px;-webkit-text-stroke:0.7px #b6b6be;">20</span>
<svg class="ic" style="left:1034.0px;top:1863.0px;width:48px;height:48px;color:#5e5e63;" viewBox="0 0 24 24" fill="none" stroke="currentColor" stroke-width="2" stroke-linecap="round" stroke-linejoin="round"><path d="m6 9 6 6 6-6"/></svg>
<span style="left:4165.1px;top:1862px;font-size:42.5px;line-height:52px;color:#9f9fa9;letter-spacing:-0.41px;-webkit-text-stroke:1.5px #9f9fa9;">Page 1 of 1</span>
<div class="bx" style="left:4473.0px;top:1839.0px;width:96.0px;height:96.0px;border:3px solid #2c2c30;border-radius:24px;"></div>
<svg class="ic" style="left:4497.0px;top:1863.0px;width:48px;height:48px;color:#5d5d62;" viewBox="0 0 15 15" fill="none" stroke="currentColor" stroke-width="1.03" stroke-linecap="round" stroke-linejoin="round"><path d="M6.5 3.5l-4 4 4 4"/><path d="M12.5 3.5l-4 4 4 4"/></svg>
<div class="bx" style="left:4593.0px;top:1839.0px;width:96.0px;height:96.0px;border:3px solid #2c2c30;border-radius:24px;"></div>
<svg class="ic" style="left:4617.0px;top:1863.0px;width:48px;height:48px;color:#5d5d62;" viewBox="0 0 15 15" fill="none" stroke="currentColor" stroke-width="1.03" stroke-linecap="round" stroke-linejoin="round"><path d="M8.5 3.5l-3.75 4 3.75 4"/></svg>
<div class="bx" style="left:4713.0px;top:1839.0px;width:96.0px;height:96.0px;border:3px solid #2c2c30;border-radius:24px;"></div>
<svg class="ic" style="left:4737.0px;top:1863.0px;width:48px;height:48px;color:#5d5d62;" viewBox="0 0 15 15" fill="none" stroke="currentColor" stroke-width="1.03" stroke-linecap="round" stroke-linejoin="round"><path d="M6.5 3.5l3.75 4-3.75 4"/></svg>
<div class="bx" style="left:4833.0px;top:1839.0px;width:96.0px;height:96.0px;border:3px solid #2c2c30;border-radius:24px;"></div>
<svg class="ic" style="left:4857.0px;top:1863.0px;width:48px;height:48px;color:#5d5d62;" viewBox="0 0 15 15" fill="none" stroke="currentColor" stroke-width="1.03" stroke-linecap="round" stroke-linejoin="round"><path d="M2.5 3.5l4 4-4 4"/><path d="M8.5 3.5l4 4-4 4"/></svg>
</section>
</main>
</div>
<div id="fade"></div>
</div>
</body>
</html>
